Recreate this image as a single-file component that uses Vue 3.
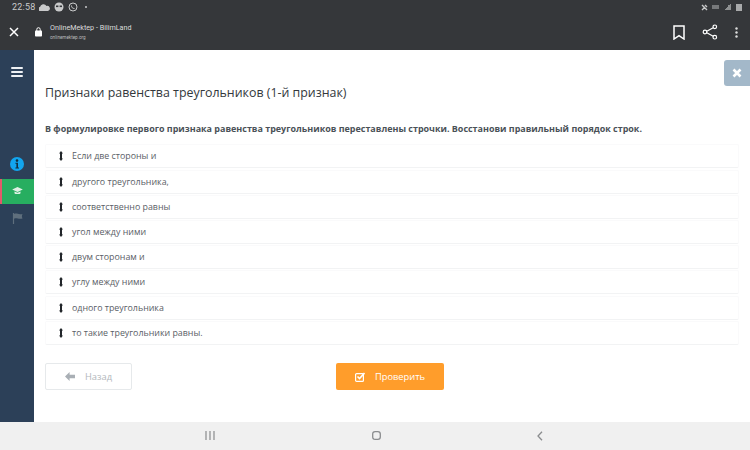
<script setup>
const rows = ['Если две стороны и','другого треугольника,','соответственно равны','угол между ними','двум сторонам и','углу между ними','одного треугольника','то такие треугольники равны.']
</script>

<template>
  <div class="screen">
    <header class="chrome">
      <div class="status">
        <div class="status-left">
          <span class="time">22:58</span>
          <svg width="11" height="7" viewBox="0 0 11 7"><path d="M1 7a2 2 0 0 1 0-4 3.5 3.5 0 0 1 6.5-1A2.5 2.5 0 0 1 9 7z" fill="#c9cacb"/></svg>
          <svg width="10" height="10" viewBox="0 0 10 10"><circle cx="5" cy="5" r="4.5" fill="#c9cacb"/><rect x="2" y="3.5" width="2.4" height="1.6" fill="#35373a"/><rect x="5.6" y="3.5" width="2.4" height="1.6" fill="#35373a"/></svg>
          <svg width="10" height="10" viewBox="0 0 10 10"><circle cx="5" cy="5" r="4" fill="none" stroke="#c9cacb" stroke-width="1"/><path d="M3.5 3.5c0 2 1 3 3 3" fill="none" stroke="#c9cacb"/></svg>
          <span class="dot"></span>
        </div>
        <div class="status-right">
          <svg width="7" height="7" viewBox="0 0 7 7"><path d="M1 1l5 5M1 6l3-3M4 1l2 2" stroke="#c9cacb" stroke-width="1.4"/></svg>
          <span class="tiny"></span>
          <span class="bars"></span>
          <span class="battery"></span>
        </div>
      </div>
      <div class="toolbar">
        <svg class="close" width="10" height="10" viewBox="0 0 10 10"><path d="M1 1l8 8M9 1l-8 8" stroke="#fff" stroke-width="1.5"/></svg>
        <svg class="lock" width="8" height="10" viewBox="0 0 8 10"><rect y="3.5" width="7" height="6" rx=".8" fill="#fff"/><path d="M1.8 4V2.4a1.7 1.7 0 0 1 3.4 0V4" fill="none" stroke="#fff"/></svg>
        <div class="site">
          <div class="site-title">OnlineMektep - BilimLand</div>
          <div class="site-url">onlinemektep.org</div>
        </div>
        <div class="tool-icons">
          <svg width="12" height="15" viewBox="0 0 12 15"><path d="M1 1h10v13l-5-3.4L1 14z" fill="none" stroke="#fff" stroke-width="1.5"/></svg>
          <svg width="16" height="16" viewBox="0 0 16 16"><path d="M12.5 3L3.5 8l9 5" fill="none" stroke="#fff" stroke-width="1.2"/><circle cx="12.8" cy="2.8" r="1.8" fill="#35373a" stroke="#fff" stroke-width="1.2"/><circle cx="3" cy="8" r="1.8" fill="#35373a" stroke="#fff" stroke-width="1.2"/><circle cx="12.8" cy="13.2" r="1.8" fill="#35373a" stroke="#fff" stroke-width="1.2"/></svg>
          <svg width="3" height="11" viewBox="0 0 3 11"><circle cx="1.5" cy="1.5" r="1.2" fill="#ddd"/><circle cx="1.5" cy="5.5" r="1.2" fill="#ddd"/><circle cx="1.5" cy="9.5" r="1.2" fill="#ddd"/></svg>
        </div>
      </div>
    </header>

    <div class="body">
      <aside class="sidebar">
        <div class="burger"><i></i><i></i><i></i></div>
        <div class="side-items">
          <div class="side-item">
            <svg width="14" height="14" viewBox="0 0 14 14"><circle cx="7" cy="7" r="7" fill="#12a5ee"/><circle cx="7" cy="3.6" r="1.3" fill="#12303f"/><path d="M5.4 5.8h2.6v4.6h1v1H5.4v-1h1V6.8h-1z" fill="#12303f"/></svg>
          </div>
          <div class="side-item active">
            <svg width="11" height="8" viewBox="0 0 12 9"><path d="M6 0l6 2.8L6 5.6 0 2.8z" fill="#dff0e4"/><path d="M2.6 5v2c1 1.3 5.8 1.3 6.8 0V5L6 6.6z" fill="#dff0e4"/></svg>
          </div>
          <div class="side-item">
            <svg width="11" height="11" viewBox="0 0 11 11"><path d="M1.5 0v11" stroke="#5f6f7d" stroke-width="1.2"/><path d="M2 1c3-1.3 4 1 8.5 0-.8 1.7-.8 3 0 4.6C6 6.6 5 4.4 2 5.7z" fill="#5f6f7d"/></svg>
          </div>
        </div>
      </aside>

      <main class="content">
        <button class="dismiss" aria-label="Закрыть">
          <svg width="10" height="10" viewBox="0 0 10 10"><path d="M1.5 1.5l7 7M8.5 1.5l-7 7" stroke="#fff" stroke-width="2.6"/></svg>
        </button>
        <h1 class="title">Признаки равенства треугольников (1-й признак)</h1>
        <p class="task">В формулировке первого признака равенства треугольников переставлены строчки. Восстанови правильный порядок строк.</p>
        <ul class="rows">
          <li v-for="row in rows" :key="row" class="row">
            <svg class="grip" width="4" height="10" viewBox="0 0 4 10"><path d="M2 0L4 2.4H3v5.2H4L2 10 0 7.6h1V2.4H0z" fill="#22262a"/></svg>
            <span>{{ row }}</span>
          </li>
        </ul>
        <div class="actions">
          <button class="btn back">
            <svg width="10" height="9" viewBox="0 0 10 9"><path d="M4.6 0L0 4.5 4.6 9V6.3H10V2.7H4.6z" fill="#a9afb5"/></svg>
            <span>Назад</span>
          </button>
          <button class="btn check">
            <svg width="10" height="10" viewBox="0 0 10 10"><rect x=".6" y="1.6" width="7.8" height="7.8" rx="1" fill="none" stroke="#fff" stroke-width="1.2"/><path d="M2.5 4.5l2 2L9.5 1" fill="none" stroke="#fff" stroke-width="1.6"/></svg>
            <span>Проверить</span>
          </button>
        </div>
      </main>
    </div>

    <footer class="navbar">
      <svg width="10" height="9" viewBox="0 0 10 9"><path d="M1 0v9M5 0v9M9 0v9" stroke="#8a8c8e" stroke-width="1.2"/></svg>
      <svg width="9" height="9" viewBox="0 0 9 9"><rect x=".7" y=".7" width="7.6" height="7.6" rx="2.4" fill="none" stroke="#8a8c8e" stroke-width="1.3"/></svg>
      <svg width="6" height="10" viewBox="0 0 6 10"><path d="M5 .7L1 5l4 4.3" fill="none" stroke="#8a8c8e" stroke-width="1.3"/></svg>
    </footer>
  </div>
</template>

<style>
html, body { margin: 0; background: #fff; }
</style>

<style scoped>
.screen { width: 750px; height: 450px; display: flex; flex-direction: column; overflow: hidden; font-family: "Open Sans", "Liberation Sans", sans-serif; }
.chrome { height: 50px; background: #35373a; flex: none; color: #fff; font-family: Roboto, "Liberation Sans", sans-serif; }
.status { height: 14px; display: flex; justify-content: space-between; align-items: center; padding: 0 8px 0 12px; }
.status-left, .status-right { display: flex; align-items: center; gap: 4px; }
.time { font-size: 9px; color: #c9cacb; letter-spacing: .2px; }
.dot { width: 2px; height: 2px; border-radius: 50%; background: #c9cacb; margin-left: 3px; }
.tiny { width: 7px; height: 4px; background: #77797b; }
.bars { width: 8px; height: 6px; background: linear-gradient(135deg, transparent 50%, #8e9091 50%); }
.battery { width: 6px; height: 7px; background: #a9aaab; margin-left: 1px; }
.toolbar { height: 36px; display: flex; align-items: center; padding-left: 9px; }
.close { margin-right: 16px; }
.lock { margin-right: 7px; margin-top: -1px; }
.site { display: flex; flex-direction: column; gap: 2px; margin-top: -1px; }
.site-title { font-size: 7.2px; line-height: 9px; color: #dcdcdc; }
.site-url { font-size: 4.6px; line-height: 7px; color: #b9babb; }
.tool-icons { margin-left: auto; display: flex; align-items: center; gap: 17px; padding-right: 12px; }
.body { flex: 1; display: flex; min-height: 0; }
.sidebar { width: 34px; flex: none; background: #2c4058; display: flex; flex-direction: column; }
.burger { display: flex; flex-direction: column; gap: 2px; padding: 17px 11px 0; }
.burger i { display: block; height: 2px; background: #eef1f4; border-radius: 1px; }
.side-items { margin-top: 74px; display: flex; flex-direction: column; gap: 2.5px; }
.side-item { height: 25px; display: flex; align-items: center; justify-content: center; }
.side-item.active { background: #27ae60; border-left: 2px solid #e2596b; box-sizing: border-box; padding-right: 2px; }
.content { flex: 1; position: relative; background: #fff; padding: 0 11px 0 11px; color: #454c53; }
.dismiss { position: absolute; top: 10px; right: 0; width: 26px; height: 26px; border: 0; border-radius: 3px 0 0 3px; background: #a3b8c9; padding: 0; display: flex; align-items: center; justify-content: center; }
.title { margin: 35px 0 0; font-size: 12.4px; line-height: 16px; font-weight: 400; color: #33383c; }
.task { margin: 21px 0 0; font-size: 8.96px; line-height: 14px; font-weight: 700; color: #4a5157; white-space: nowrap; }
.rows { list-style: none; margin: 8.4px 0 0; padding: 0; display: flex; flex-direction: column; gap: 1.2px; }
.row { height: 24px; box-sizing: border-box; display: flex; align-items: center; padding-left: 13px; gap: 9px; border: 1px solid #fafafb; border-bottom-color: #f2f3f4; border-radius: 2px; font-size: 8.85px; color: #5a6066; }
.grip { flex: none; }
.actions { margin-top: 18.6px; display: flex; }
.btn { height: 27px; box-sizing: border-box; border-radius: 2px; display: flex; align-items: center; justify-content: center; gap: 10px; font: 9.3px "Open Sans", sans-serif; padding: 0; }
.back { width: 87px; background: #fff; border: 1px solid #e6e9eb; color: #b2b7bc; }
.check { width: 108px; margin-left: 204px; background: #ff9d2b; border: 0; color: #fff; }
.navbar { height: 27px; flex: none; background: #f0f0f0; display: flex; align-items: center; justify-content: space-between; padding: 0 207px 1px 205px; }
</style>
